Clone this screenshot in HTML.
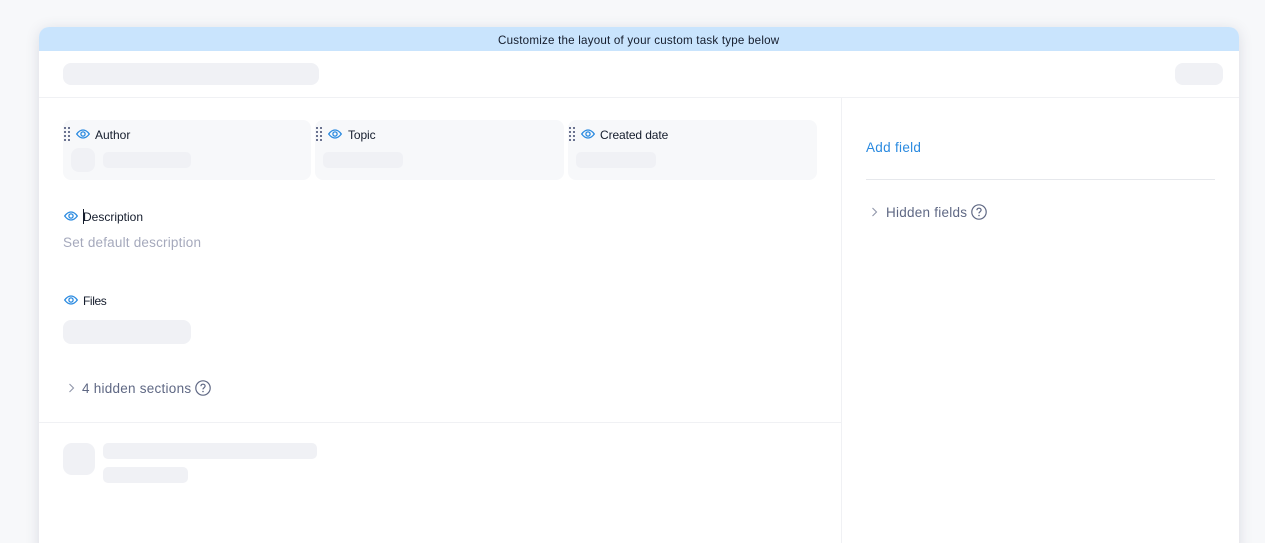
<!DOCTYPE html>
<html>
<head>
<meta charset="utf-8">
<style>
html,body{margin:0;padding:0;width:1265px;height:543px;overflow:hidden;background:#f7f8fa;font-family:"Liberation Sans",sans-serif;}
#root{position:absolute;left:0;top:0;width:1265px;height:543px;overflow:hidden;}
.abs,.t,.sk,svg{position:absolute;}
.card{position:absolute;left:39px;top:27px;width:1200px;height:530px;background:#fff;border-radius:10px;box-shadow:0 2px 14px rgba(60,70,100,.15);}
.banner{position:absolute;left:39px;top:27px;width:1200px;height:24px;background:#c9e4fd;border-radius:10px 10px 0 0;}
.t{white-space:nowrap;line-height:16px;}
.sk{background:#f0f1f5;}
.cell{position:absolute;top:120px;height:60px;background:#f7f8fa;border-radius:8px;}
.lbl{font-size:12px;color:#141c2c;}
.line{position:absolute;background:#f0f1f4;}
</style>
</head>
<body>
<div id="root">
<div class="card"></div>
<div class="banner"></div>
<div class="t" style="left:498px;top:33px;font-size:11.6px;color:#141c2c;letter-spacing:.21px;">Customize the layout of your custom task type below</div>

<div class="sk" style="left:63px;top:63px;width:256px;height:22px;border-radius:8px;"></div>
<div class="sk" style="left:1175px;top:63px;width:48px;height:22px;border-radius:8px;"></div>
<div class="line" style="left:39px;top:97px;width:1200px;height:1px;"></div>
<div class="line" style="left:841px;top:98px;width:1px;height:445px;"></div>
<div class="line" style="left:39px;top:422px;width:802px;height:1px;"></div>

<div class="cell" style="left:63px;width:248px;"></div>
<div class="cell" style="left:315px;width:249px;"></div>
<div class="cell" style="left:568px;width:249px;"></div>

<svg style="left:0;top:0;width:0;height:0;"><defs>
<g id="eye" fill="none" stroke="#2a8ae0" stroke-width="1.3"><path d="M.7 5C2.800 2.100 4.800 1 7 1s4.200 1.100 6.300 4C11.200 7.900 9.200 9 7 9S2.800 7.900.7 5z"/><circle cx="7" cy="5" r="2.100"/></g>
<g id="drag" fill="#6b7390"><rect x="0" y="0" width="2" height="2"/><rect x="4" y="0" width="2" height="2"/><rect x="0" y="4" width="2" height="2"/><rect x="4" y="4" width="2" height="2"/><rect x="0" y="8" width="2" height="2"/><rect x="4" y="8" width="2" height="2"/><rect x="0" y="12" width="2" height="2"/><rect x="4" y="12" width="2" height="2"/></g>
<g id="q"><circle cx="8" cy="8" r="7.200" fill="none" stroke="#5f6884" stroke-width="1.200"/><path d="M5.900 6.200C6 4.900 6.900 4.200 8 4.200c1.200 0 2.100.8 2.100 1.900 0 1.600-2.100 1.700-2.100 3.300" fill="none" stroke="#5f6884" stroke-width="1.200"/><circle cx="8" cy="11.500" r=".8" fill="#5f6884"/></g>
</defs></svg>

<svg style="left:64px;top:127px;" width="6" height="14"><use href="#drag"/></svg>
<svg style="left:76px;top:129px;" width="14" height="10"><use href="#eye"/></svg>
<div class="t lbl" style="left:95px;top:127px;">Author</div>
<div class="sk" style="left:71px;top:148px;width:24px;height:24px;border-radius:8px;"></div>
<div class="sk" style="left:103px;top:152px;width:88px;height:16px;border-radius:5px;"></div>

<svg style="left:316px;top:127px;" width="6" height="14"><use href="#drag"/></svg>
<svg style="left:328px;top:129px;" width="14" height="10"><use href="#eye"/></svg>
<div class="t lbl" style="left:348px;top:127px;letter-spacing:-.1px;">Topic</div>
<div class="sk" style="left:323px;top:152px;width:80px;height:16px;border-radius:5px;"></div>

<svg style="left:569px;top:127px;" width="6" height="14"><use href="#drag"/></svg>
<svg style="left:581px;top:129px;" width="14" height="10"><use href="#eye"/></svg>
<div class="t lbl" style="left:600px;top:127px;letter-spacing:-.1px;">Created date</div>
<div class="sk" style="left:576px;top:152px;width:80px;height:16px;border-radius:5px;"></div>

<svg style="left:64px;top:211px;" width="14" height="10"><use href="#eye"/></svg>
<div class="t lbl" style="left:83px;top:209px;">Description</div>
<div class="abs" style="left:83px;top:209px;width:1px;height:15px;background:#141c2c;"></div>
<div class="t" style="left:63px;top:235px;font-size:13.5px;color:#a5a9bc;letter-spacing:.2px;">Set default description</div>

<svg style="left:64px;top:295px;" width="14" height="10"><use href="#eye"/></svg>
<div class="t lbl" style="left:83px;top:293px;letter-spacing:-.4px;">Files</div>
<div class="sk" style="left:63px;top:320px;width:128px;height:24px;border-radius:8px;"></div>

<svg style="left:68px;top:383px;" width="8" height="10"><path d="M1.500 1l4 4-4 4" fill="none" stroke="#9096aa" stroke-width="1.100"/></svg>
<div class="t" style="left:82px;top:381px;font-size:13.5px;color:#5f6884;letter-spacing:.25px;">4 hidden sections</div>
<svg style="left:195px;top:380px;" width="16" height="16"><use href="#q"/></svg>

<div class="sk" style="left:63px;top:443px;width:32px;height:32px;border-radius:9px;"></div>
<div class="sk" style="left:103px;top:443px;width:214px;height:16px;border-radius:5px;"></div>
<div class="sk" style="left:103px;top:467px;width:85px;height:16px;border-radius:5px;"></div>

<div class="t" style="left:866px;top:140px;font-size:13.5px;color:#2a8ae0;letter-spacing:.3px;">Add field</div>
<div class="line" style="left:866px;top:179px;width:349px;height:1px;background:#e6e8ec;"></div>
<svg style="left:871px;top:207px;" width="8" height="10"><path d="M1.500 1l4 4-4 4" fill="none" stroke="#9096aa" stroke-width="1.100"/></svg>
<div class="t" style="left:886px;top:205px;font-size:13.5px;color:#5f6884;letter-spacing:.25px;">Hidden fields</div>
<svg style="left:971px;top:204px;" width="16" height="16"><use href="#q"/></svg>
</div>
</body>
</html>
